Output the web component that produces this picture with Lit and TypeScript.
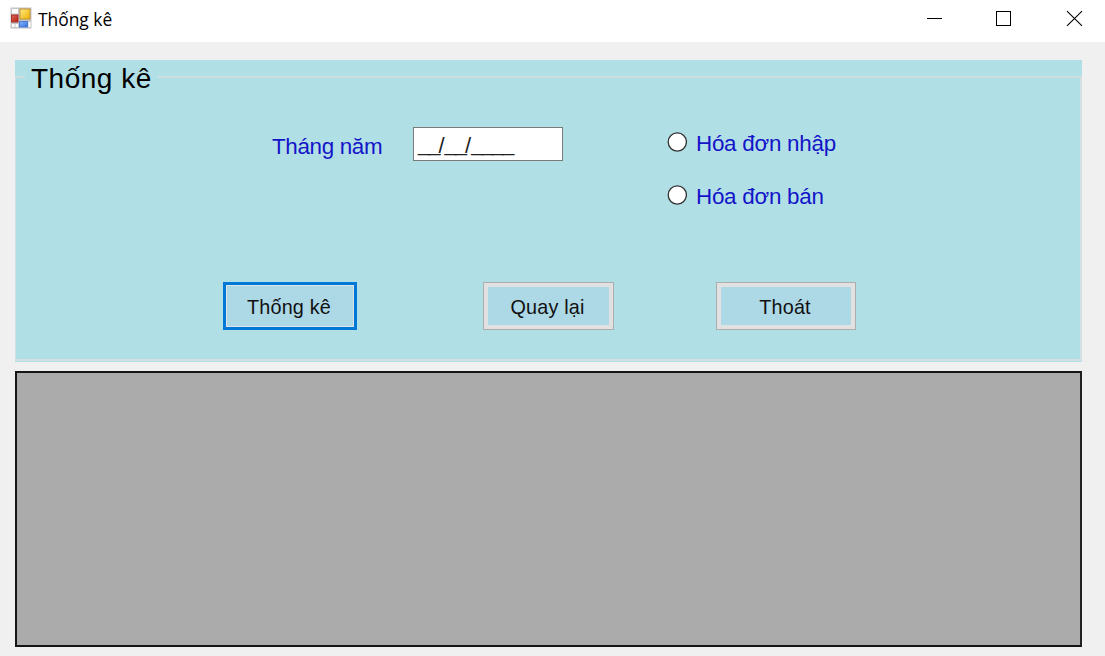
import { LitElement, html, css } from "lit";
import { customElement, property } from "lit/decorators.js";

@customElement("title-bar")
class TitleBar extends LitElement {
  static styles = css`
    :host { display: flex; height: 42px; background: #fff; align-items: flex-start; }
    .logo { margin: 7px 0 0 10px; width: 22px; height: 22px; flex: none; }
    .title { margin-left: 6px; margin-top: 7px; font: 17.4px/24px "Open Sans", "Noto Sans", sans-serif; letter-spacing: 0; color: #000; white-space: nowrap; }
    .controls { margin-left: auto; width: 180px; height: 42px; flex: none; }
  `;
  @property() label = "";
  render() {
    return html`
      <svg class="logo" viewBox="0 0 22 22">
        <defs>
          <linearGradient id="y" x1="0" y1="0" x2="1" y2="1"><stop offset="0" stop-color="#ffeb85"/><stop offset="1" stop-color="#eeb000"/></linearGradient>
          <linearGradient id="r" x1="0" y1="0" x2="1" y2="1"><stop offset="0" stop-color="#e0695a"/><stop offset="1" stop-color="#b51c10"/></linearGradient>
          <linearGradient id="b" x1="0" y1="0" x2="1" y2="1"><stop offset="0" stop-color="#86b5ff"/><stop offset="1" stop-color="#346fd8"/></linearGradient>
        </defs>
        <rect x="0.5" y="0.5" width="21" height="21" fill="#c4c4c8"/>
        <rect x="2" y="2" width="6" height="4.5" fill="#fff"/>
        <rect x="2" y="17" width="2.5" height="3" fill="#fff"/>
        <rect x="5.5" y="17" width="2.5" height="3" fill="#fff"/>
        <rect x="18.5" y="15" width="2" height="5" fill="#fff"/>
        <rect x="1.5" y="8" width="6.5" height="7" fill="url(#r)" stroke="#a83226"/>
        <rect x="10" y="2" width="10" height="10" fill="url(#y)" stroke="#c3922a"/>
        <rect x="9.5" y="14.5" width="8" height="5.5" fill="url(#b)" stroke="#4d7fd0"/>
      </svg>
      <span class="title">${this.label}</span>
      <svg class="controls" viewBox="0 0 180 42" fill="none" stroke="#000">
        <path d="M2 18.5H17" />
        <rect x="71.5" y="11.5" width="14" height="14" />
        <path d="M142 11.2L157 25.8M157 11.2L142 25.8" stroke-width="1.1" />
      </svg>
    `;
  }
}

@customElement("form-button")
class FormButton extends LitElement {
  static styles = css`
    :host { display: block; height: 48px; }
    button { width: 100%; height: 48px; margin: 0; padding: 2px 2px 0 0; display: block; background: #add8e6; border: 1px solid #adadad;
      box-shadow: inset 0 0 0 4px #e1e1e1; border-radius: 0; color: #111;
      font: 19.8px/24px "Liberation Sans", Arial, sans-serif; letter-spacing: 0.2px; white-space: nowrap; }
    .main { border: 3px solid #0078d7; box-shadow: inset 0 0 0 1px #dfe3e8; }
  `;
  @property() label = "";
  @property({ type: Boolean }) primary = false;
  render() {
    return html`<button class=${this.primary ? "main" : ""}>${this.label}</button>`;
  }
}

@customElement("radio-option")
class RadioOption extends LitElement {
  static styles = css`
    :host { display: flex; align-items: flex-start; height: 28px; font: 22.4px/28px "Liberation Sans", Arial, sans-serif; letter-spacing: -0.25px; color: #1414c8; white-space: nowrap; }
    .dot { width: 20px; height: 20px; margin: 3px 9px 0 0; flex: none; }
    .text { margin-top: 1px; }
  `;
  @property() label = "";
  render() {
    return html`<svg class="dot" viewBox="0 0 20 20"><circle cx="10.3" cy="10" r="9.1" fill="#fff" stroke="#333" stroke-width="1.3"/></svg><span class="text">${this.label}</span>`;
  }
}

@customElement("app-root")
class AppRoot extends LitElement {
  static styles = css`
    :host { display: flex; flex-direction: column; width: 1105px; height: 656px; overflow: hidden; background: #f0f0f0; font-family: "Liberation Sans", Arial, sans-serif; }
    .body { padding: 18px 23px 9px 15px; flex: 1; display: flex; flex-direction: column; gap: 9px; box-sizing: border-box; }
    .group { height: 302px; background: #b0e0e6; box-sizing: border-box; display: flex; flex-direction: column; }
    .caption { display: flex; height: 36px; }
    .edge { border-top: 2px solid #cfdee1; margin-top: 16px; box-sizing: border-box; }
    .edge.left { width: 10px; border-left: 1px solid #d3dfe2; }
    .edge.right { flex: 1; border-right: 2px solid #d3dfe2; }
    .legend { width: 133px; box-sizing: border-box; padding-left: 6px; font-size: 28px; line-height: 38px; letter-spacing: 0.5px; color: #000; white-space: nowrap; }
    .content { flex: 1; border: solid #d3dfe2; border-width: 0 2px 2px 1px; margin-bottom: 1px; }
    .fields { display: flex; height: 126px; padding: 31px 0 0 256px; box-sizing: border-box; }
    .label { width: 141px; font-size: 22.4px; line-height: 28px; letter-spacing: -0.33px; padding-top: 6px; color: #1414c8; white-space: nowrap; box-sizing: border-box; }
    .mask { width: 150px; height: 34px; box-sizing: border-box; border: 1px solid #7a7a7a; background: #fff; font-size: 22px; line-height: 35px; padding-left: 4px; color: #222; white-space: nowrap; overflow: hidden; }
    .blank { letter-spacing: -2px; vertical-align: 2px; line-height: 1; }
    .options { margin-left: 104px; margin-top: 2px; display: flex; flex-direction: column; gap: 25px; }
    .actions { display: flex; padding: 60px 0 0 207px; }
    .a { width: 134px; }
    .b { width: 131px; margin-left: 126px; }
    .c { width: 140px; margin-left: 102px; }
    .grid { height: 276px; box-sizing: border-box; border: 2px solid #151515; border-right-color: #222; background: #ababab; }
  `;
  render() {
    return html`
      <title-bar label="Thống kê"></title-bar>
      <main class="body">
        <section class="group">
          <div class="caption"><span class="edge left"></span><span class="legend">Thống kê</span><span class="edge right"></span></div>
          <div class="content">
            <div class="fields">
              <span class="label">Tháng năm</span>
              <div class="mask"><span class="blank">__</span>/<span class="blank">__</span>/<span class="blank">____</span></div>
              <div class="options">
                <radio-option label="Hóa đơn nhập"></radio-option>
                <radio-option label="Hóa đơn bán"></radio-option>
              </div>
            </div>
            <div class="actions">
              <form-button class="a" primary label="Thống kê"></form-button>
              <form-button class="b" label="Quay lại"></form-button>
              <form-button class="c" label="Thoát"></form-button>
            </div>
          </div>
        </section>
        <div class="grid"></div>
      </main>
    `;
  }
}
